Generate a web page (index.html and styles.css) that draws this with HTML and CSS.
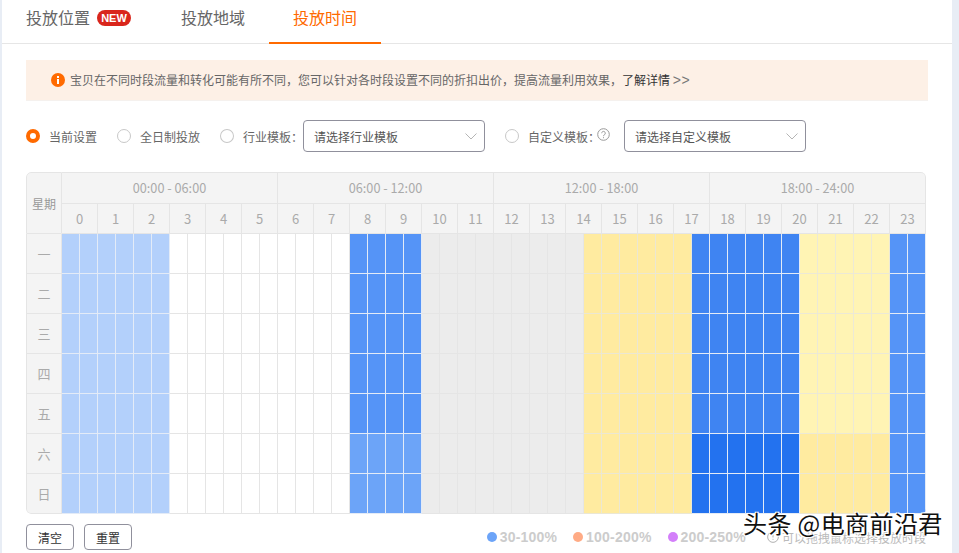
FILE: index.html
```html
<!DOCTYPE html>
<html lang="zh-CN">
<head>
<meta charset="utf-8">
<title>投放时间</title>
<link rel="stylesheet" href="styles.css">
</head>
<body>
<main class="panel">
  <nav class="tabs">
    <a class="tab tab-first">投放位置<span class="badge">NEW</span></a>
    <a class="tab">投放地域</a>
    <a class="tab active">投放时间</a>
  </nav>
  <div class="notice">
    <svg class="notice-icon" viewBox="0 0 14 14"><circle cx="7" cy="7" r="7" fill="#ff6a00"/><rect x="6" y="6" width="2" height="5" fill="#fff"/><rect x="6" y="3" width="2" height="2" fill="#fff"/></svg>
    <span>宝贝在不同时段流量和转化可能有所不同，您可以针对各时段设置不同的折扣出价，提高流量利用效果，<b class="more">了解详情</b> <span class="arrows">&gt;&gt;</span></span>
  </div>
  <div class="options">
    <label class="opt opt-current"><i class="radio checked"></i>当前设置</label>
    <label class="opt opt-all"><i class="radio"></i>全日制投放</label>
    <label class="opt opt-industry"><i class="radio"></i>行业模板：</label>
    <div class="select select-industry">请选择行业模板<svg class="chev" viewBox="0 0 12 7"><path d="M.5.5 6 6l5.500-5.500" fill="none" stroke="#b5b5b5"/></svg></div>
    <label class="opt opt-custom"><i class="radio"></i>自定义模板：<svg class="help" viewBox="0 0 13 13"><circle cx="6.500" cy="6.500" r="5.800" fill="none" stroke="#999"/><path d="M4.700 5.200a1.800 1.800 0 1 1 2.800 1.500c-.7.400-1 .7-1 1.500" fill="none" stroke="#999"/><rect x="6" y="9.200" width="1" height="1" fill="#999"/></svg></label>
    <div class="select">请选择自定义模板<svg class="chev" viewBox="0 0 12 7"><path d="M.5.5 6 6l5.500-5.500" fill="none" stroke="#b5b5b5"/></svg></div>
  </div>
  <div class="sched">
    <div class="week-head">星期</div>
    <div class="group">00:00 - 06:00</div>
    <div class="group">06:00 - 12:00</div>
    <div class="group">12:00 - 18:00</div>
    <div class="group group-last">18:00 - 24:00</div>
    <div class="hour">0</div><div class="hour">1</div><div class="hour">2</div><div class="hour">3</div><div class="hour">4</div><div class="hour">5</div>
    <div class="hour">6</div><div class="hour">7</div><div class="hour">8</div><div class="hour">9</div><div class="hour">10</div><div class="hour">11</div>
    <div class="hour">12</div><div class="hour">13</div><div class="hour">14</div><div class="hour">15</div><div class="hour">16</div><div class="hour">17</div>
    <div class="hour">18</div><div class="hour">19</div><div class="hour">20</div><div class="hour">21</div><div class="hour">22</div><div class="hour">23</div>

    <div class="day">一</div><div class="seg s6 c-light"></div><div class="seg s10 c-none"></div><div class="seg s4 c-mid"></div><div class="seg s9 c-gray"></div><div class="seg s6 c-yellow"></div><div class="seg s6 c-deep"></div><div class="seg s5 c-pale"></div><div class="seg s2 c-mid"></div>
    <div class="day">二</div><div class="seg s6 c-light"></div><div class="seg s10 c-none"></div><div class="seg s4 c-mid"></div><div class="seg s9 c-gray"></div><div class="seg s6 c-yellow"></div><div class="seg s6 c-deep"></div><div class="seg s5 c-pale"></div><div class="seg s2 c-mid"></div>
    <div class="day">三</div><div class="seg s6 c-light"></div><div class="seg s10 c-none"></div><div class="seg s4 c-mid"></div><div class="seg s9 c-gray"></div><div class="seg s6 c-yellow"></div><div class="seg s6 c-deep"></div><div class="seg s5 c-pale"></div><div class="seg s2 c-mid"></div>
    <div class="day">四</div><div class="seg s6 c-light"></div><div class="seg s10 c-none"></div><div class="seg s4 c-mid"></div><div class="seg s9 c-gray"></div><div class="seg s6 c-yellow"></div><div class="seg s6 c-deep"></div><div class="seg s5 c-pale"></div><div class="seg s2 c-mid"></div>
    <div class="day">五</div><div class="seg s6 c-light"></div><div class="seg s10 c-none"></div><div class="seg s4 c-mid"></div><div class="seg s9 c-gray"></div><div class="seg s6 c-yellow"></div><div class="seg s6 c-deep"></div><div class="seg s5 c-pale"></div><div class="seg s2 c-mid"></div>
    <div class="day">六</div><div class="seg s6 c-light"></div><div class="seg s10 c-none"></div><div class="seg s4 c-soft"></div><div class="seg s9 c-gray"></div><div class="seg s6 c-yellow"></div><div class="seg s6 c-strong"></div><div class="seg s5 c-yellow"></div><div class="seg s2 c-mid"></div>
    <div class="day day-last">日</div><div class="seg s6 c-light"></div><div class="seg s10 c-none"></div><div class="seg s4 c-soft"></div><div class="seg s9 c-gray"></div><div class="seg s6 c-yellow"></div><div class="seg s6 c-strong"></div><div class="seg s5 c-yellow"></div><div class="seg s2 c-mid"></div>
  </div>
  <div class="foot">
    <button class="btn">清空</button>
    <button class="btn">重置</button>
    <div class="legend">
      <span class="key"><i class="dot dot-blue"></i>30-100%</span>
      <span class="key"><i class="dot dot-orange"></i>100-200%</span>
      <span class="key key-last"><i class="dot dot-purple"></i>200-250%</span>
      <span class="tip"><svg class="tip-icon" viewBox="0 0 13 13"><circle cx="6.500" cy="6.500" r="5.800" fill="none" stroke="#aaa"/><path d="M6.500 3v4" stroke="#aaa"/><rect x="6" y="8.500" width="1" height="1" fill="#aaa"/></svg>可以拖拽鼠标选择投放时段</span>
    </div>
  </div>
  <div class="watermark">头条 @电商前沿君</div>
</main>
</body>
</html>
```
FILE: styles.css
```css
* { box-sizing: border-box; }
html, body { margin: 0; height: 100%; overflow: hidden; }
body {
  background: #e8edf5;
  font-family: "Noto Sans CJK SC", "Liberation Sans", sans-serif;
  color: #666;
  font-size: 12px;
}
.panel {
  position: relative;
  width: 950px;
  height: 553px;
  margin-left: 2px;
  background: #fff;
}
.tabs {
  display: flex;
  height: 44px;
  border-bottom: 1px solid #e6e6e6;
}
.tab {
  display: flex;
  align-items: center;
  height: 44px;
  padding: 0 24px 10px;
  font-size: 16px;
  color: #666;
}
.tab-first { width: 155px; }
.tab.active {
  color: #ff6a00;
  border-bottom: 2px solid #ff6a00;
  padding-bottom: 8px;
}
.badge {
  margin: 2px 0 0 7px;
  width: 34px;
  height: 16px;
  border-radius: 8px;
  background: #d9261c;
  color: #fff;
  font: bold 11px/16px "Liberation Sans", sans-serif;
  text-align: center;
}
.notice {
  display: flex;
  align-items: center;
  gap: 5px;
  height: 41px;
  width: 902px;
  margin: 16px 0 0 24px;
  padding: 0 0 1px 25px;
  background: #fdf0e6;
  border-bottom: 1px solid #f5f1ee;
  color: #666;
}
.notice-icon { width: 14px; height: 14px; flex: none; }
.more { font-weight: 400; color: #333; }
.arrows { font: 14px "Liberation Sans", sans-serif; letter-spacing: .5px; color: #777; }
.options {
  display: flex;
  align-items: center;
  height: 32px;
  margin: 19px 0 0 24px;
  color: #666;
}
.opt { display: flex; align-items: center; white-space: nowrap; }
.opt-current { width: 91px; }
.opt-all { width: 103px; }
.opt-industry { width: 83px; }
.opt-custom { margin-left: 20px; width: 119px; }
.radio {
  width: 14px;
  height: 14px;
  margin-right: 9px;
  border: 1px solid #c8c8c8;
  border-radius: 50%;
  background: #fff;
}
.radio.checked { border: 4px solid #ff6a00; }
.help { width: 13px; height: 13px; margin: -3px 0 0 -3px; }
.select {
  display: flex;
  align-items: center;
  justify-content: space-between;
  width: 182px;
  height: 32px;
  padding: 0 7px 0 10px;
  border: 1px solid #90909c;
  border-radius: 4px;
  color: #555;
}
.chev { width: 12px; height: 7px; }
.sched {
  display: grid;
  grid-template-columns: 36px repeat(48, 18px);
  grid-template-rows: 32px 30px repeat(7, 40px);
  width: 900px;
  margin: 20px 0 0 24px;
  border-radius: 5px;
  overflow: hidden;
  color: #aaa;
}
.week-head, .group, .hour, .day {
  display: flex;
  align-items: center;
  justify-content: center;
  background: #f4f4f4;
  border: solid #e5e5e5;
  border-width: 0 1px 1px 0;
}
.week-head {
  grid-row: span 2;
  border-width: 1px;
  border-top-left-radius: 5px;
  color: #999;
}
.group { grid-column: span 12; border-top-width: 1px; font-size: 12.7px; padding-bottom: 1px; }
.group-last { border-top-right-radius: 5px; }
.hour { grid-column: span 2; font-size: 13px; }
.day { font-size: 13px; border-left-width: 1px; }
.day-last { border-bottom-left-radius: 5px; }
.seg {
  --line: #e5e5e5;
  background-image:
    linear-gradient(var(--line), var(--line)),
    repeating-linear-gradient(90deg, transparent 0 17px, var(--line) 17px 18px);
  background-size: 100% 1px, 100% 100%;
  background-position: 0 100%, 0 0;
  background-repeat: no-repeat;
}
.s2 { grid-column: span 2; }
.s4 { grid-column: span 4; }
.s5 { grid-column: span 5; }
.s6 { grid-column: span 6; }
.s9 { grid-column: span 9; }
.s10 { grid-column: span 10; }
.c-none { background-color: #fff; }
.c-light { background-color: #b3d0fb; --line: #e3ebf7; }
.c-mid { background-color: #5594f7; --line: #e3ebf7; }
.c-soft { background-color: #6ca4f8; --line: #e3ebf7; }
.c-deep { background-color: #3f84f2; --line: #e3ebf7; }
.c-strong { background-color: #2372ef; --line: #e3ebf7; }
.c-gray { background-color: #ececec; }
.c-yellow { background-color: #ffeba0; --line: #ebe7d3; }
.c-pale { background-color: #fff4b4; --line: #ece9d6; }
.foot {
  display: flex;
  align-items: center;
  gap: 10px;
  margin: 10px 0 0 24px;
  width: 900px;
}
.btn {
  width: 48px;
  height: 26px;
  padding: 0;
  background: #fff;
  border: 1px solid #90909c;
  border-radius: 4px;
  color: #333;
  font: inherit;
}
.legend {
  display: flex;
  align-items: center;
  margin-left: auto;
  color: #ccc;
}
.key {
  display: flex;
  align-items: center;
  gap: 3px;
  margin-right: 16px;
  font: bold 14px "Liberation Sans", sans-serif;
  letter-spacing: .2px;
}
.key-last { margin-right: 21px; }
.dot { width: 10px; height: 10px; border-radius: 50%; }
.dot-blue { background: #6ca4f8; }
.dot-orange { background: #ffab85; }
.dot-purple { background: #d37ffa; }
.tip { display: flex; align-items: center; gap: 3px; color: #bbb; }
.tip-icon { width: 12px; height: 12px; }
.watermark {
  position: absolute;
  left: 741px;
  top: 507px;
  color: #111;
  font-size: 24px;
  letter-spacing: .4px;
  line-height: 32px;
  white-space: nowrap;
  text-shadow: 1px 1px 0 #fff, -1px -1px 0 #fff, 1px -1px 0 #fff, -1px 1px 0 #fff;
}
```
